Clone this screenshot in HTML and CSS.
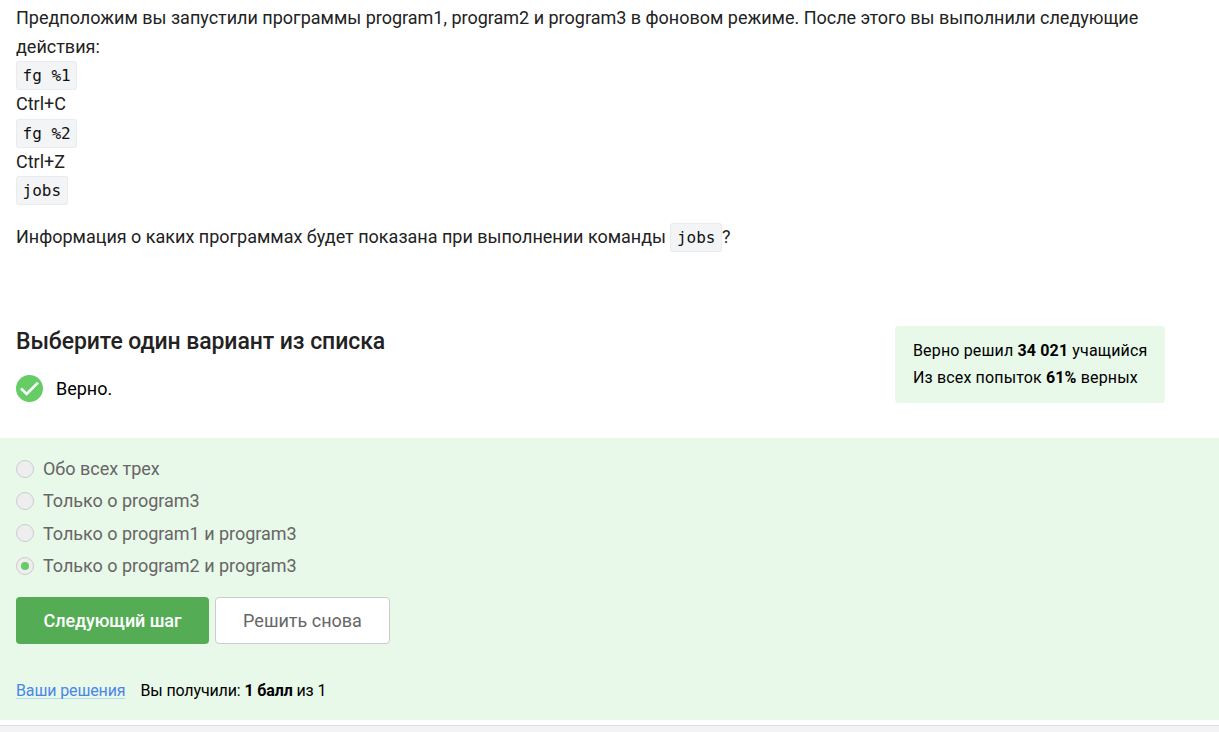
FILE: index.html
```html
<!DOCTYPE html>
<html lang="ru">
<head>
<meta charset="utf-8">
<title>Задание</title>
<link rel="stylesheet" href="styles.css">
</head>
<body>
<main class="page">
  <section class="task">
    <p class="line">Предположим вы запустили программы program1, program2 и program3 в фоновом режиме. После этого вы выполнили следующие<br>действия:<br><code>fg %1</code><br>Ctrl+C<br><code>fg %2</code><br>Ctrl+Z<br><code>jobs</code></p>
    <p class="question">Информация о каких программах будет показана при выполнении команды <code>jobs</code>?</p>
  </section>
  <section class="head">
    <div class="head-main">
      <h2 class="title">Выберите один вариант из списка</h2>
      <div class="status">
        <svg class="check" viewBox="0 0 27 27"><circle cx="13.5" cy="13.5" r="13.5" fill="#66cc66"/><path d="M5 13.6l5.6 5.3L22 7.6" fill="none" stroke="#fff" stroke-width="2.7"/></svg>
        <span>Верно.</span>
      </div>
    </div>
    <aside class="stats">
      <div>Верно решил <b>34 021</b> учащийся</div>
      <div>Из всех попыток <b>61%</b> верных</div>
    </aside>
  </section>
  <section class="quiz">
    <ul class="options">
      <li class="option"><i class="radio"></i><span>Обо всех трех</span></li>
      <li class="option"><i class="radio"></i><span>Только о program3</span></li>
      <li class="option"><i class="radio"></i><span>Только о program1 и program3</span></li>
      <li class="option"><i class="radio checked"></i><span>Только о program2 и program3</span></li>
    </ul>
    <div class="buttons">
      <button class="btn primary">Следующий шаг</button>
      <button class="btn secondary">Решить снова</button>
    </div>
    <div class="result"><a class="link">Ваши решения</a><span>Вы получили: <b>1 балл</b> из 1</span></div>
  </section>
  <div class="footer"></div>
</main>
</body>
</html>
```
FILE: styles.css
```css
* { box-sizing: border-box; }
body { margin: 0; background: #fff; color: #222; font-family: Roboto, sans-serif; font-size: 18px; }
.page { height: 732px; overflow: hidden; display: flex; flex-direction: column; }
.task { height: 326px; padding: 4px 16px 0; line-height: 28.8px; letter-spacing: -0.007px; white-space: nowrap; }
.line, .question { margin: 0; }
.question { margin-top: 17.4px; }
code { font-family: "DejaVu Sans Mono", monospace; font-size: 16px; line-height: 1; letter-spacing: 0; vertical-align: 0.4px; padding: 4px 5.5px; background: #f3f4f6; border: 1px solid #eaebef; border-radius: 3px; color: #111; }
.head { height: 112px; display: flex; justify-content: space-between; padding: 0 54px 0 16px; }
.title { margin: 0; padding-top: 1px; font-size: 23px; font-weight: 500; line-height: 30px; letter-spacing: -0.08px; }
.status { display: flex; align-items: center; gap: 13px; margin-top: 18px; color: #000; }
.check { width: 27px; height: 27px; }
.stats { width: 270px; height: 77px; background: #e8f8e9; border-radius: 4px; padding: 11px 18px; font-size: 16px; line-height: 27px; letter-spacing: 0.15px; color: #000; white-space: nowrap; }
.quiz { height: 282px; background: #e8f8e9; padding: 14.5px 16px 0; }
.options { list-style: none; margin: 0; padding: 0; }
.option { height: 32.3px; display: flex; align-items: center; gap: 9px; color: #666; letter-spacing: -0.02px; }
.radio { width: 18px; height: 18px; border: 1px solid #ccc; border-radius: 50%; background: #eee; display: flex; align-items: center; justify-content: center; }
.checked::after { content: ""; width: 8px; height: 8px; border-radius: 50%; background: #66cc66; }
.buttons { display: flex; gap: 6px; margin-top: 15.3px; }
.btn { height: 47px; border-radius: 4px; font: 18px Roboto, sans-serif; padding: 0; }
.primary { width: 193px; background: #54ad54; color: #fff; border: 0; font-weight: 500; letter-spacing: -0.08px; }
.secondary { width: 175px; background: #fff; color: #666; border: 1px solid #ccc; }
.result { margin-top: 36px; font-size: 16px; line-height: 22px; letter-spacing: -0.13px; display: flex; gap: 15px; align-items: flex-start; color: #000; }
.link { color: #4a86e8; height: 19px; border-bottom: 1px solid #b8daec; line-height: 22px; }
.footer { margin-top: 5px; height: 7px; background: #f3f3f5; border-top: 1px solid #ddd; }
```
